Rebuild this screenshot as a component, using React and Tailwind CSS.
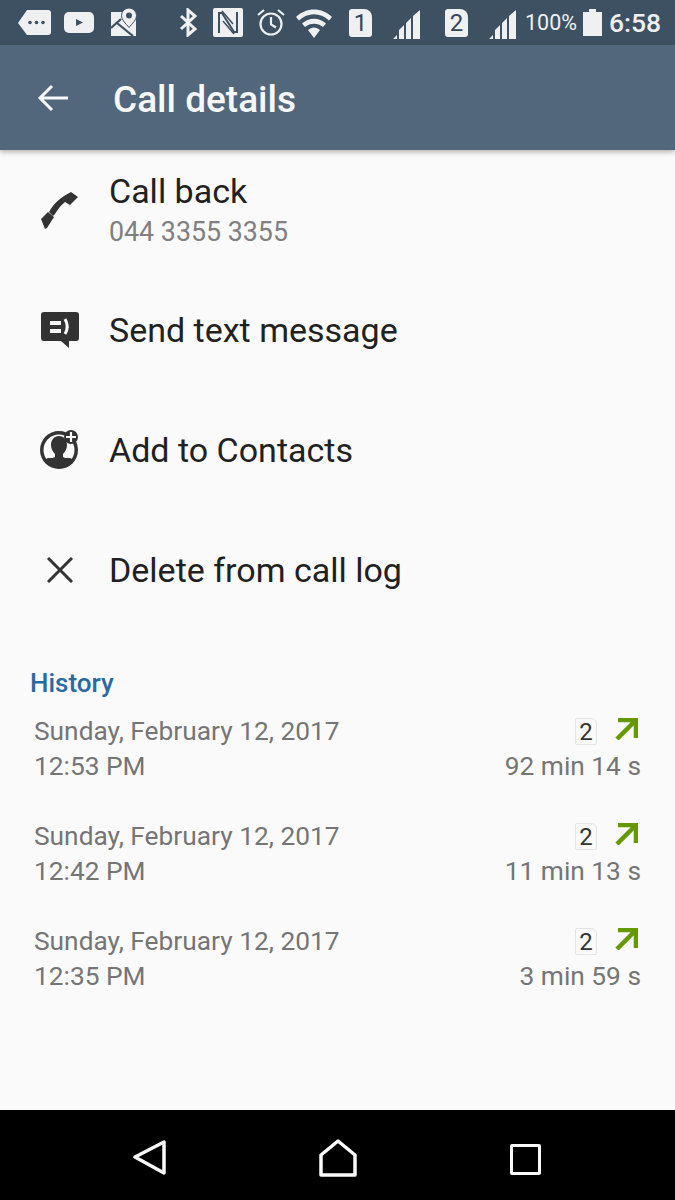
const history = [
  { time: "12:53 PM", duration: "92 min 14 s" },
  { time: "12:42 PM", duration: "11 min 13 s" },
  { time: "12:35 PM", duration: "3 min 59 s" },
];

function SimCard({ n }) {
  return (
    <div className="flex h-[28px] w-[23px] items-center justify-center rounded-[3px] rounded-tr-[8px] bg-[#eef0f2] text-[24px] leading-none text-[#34475a]">
      {n}
    </div>
  );
}

function Signal() {
  return (
    <svg width="28" height="29" viewBox="0 0 28 29" fill="#eef0f2">
      <path d="M0 29l4-4v4zM6 29v-9l5-5v14zM13 29V13l5-5v21zM20 29V6l7-6v29z" />
    </svg>
  );
}

function StatusBar() {
  return (
    <div className="relative h-[45px] shrink-0 bg-[#3e5162]">
      <div className="absolute left-[18px] top-[10px] flex items-center">
        <svg width="33" height="25" viewBox="0 0 33 25">
          <path d="M9 0h21a3 3 0 0 1 3 3v19a3 3 0 0 1-3 3H9l-9-12z" fill="#eef0f2" />
          <circle cx="12" cy="12.500" r="1.800" fill="#3e5162" />
          <circle cx="18.500" cy="12.500" r="1.800" fill="#3e5162" />
          <circle cx="25" cy="12.500" r="1.800" fill="#3e5162" />
        </svg>
      </div>
      <div className="absolute left-[64px] top-[12px]">
        <svg width="30" height="21" viewBox="0 0 30 21">
          <rect width="30" height="21" rx="5" fill="#eef0f2" />
          <path d="M12 7l7 3.500-7 3.500z" fill="#3e5162" />
        </svg>
      </div>
      <div className="absolute left-[111px] top-[8px]">
        <svg width="26" height="28" viewBox="0 0 26 28" fill="#eef0f2">
          <path d="M0 4h11l7 14 7-10v20H0z" />
          <path d="M18 0a7.500 7.500 0 0 1 7.500 7.500c0 4-4 8-7.500 12-3.500-4-7.500-8-7.500-12A7.500 7.500 0 0 1 18 0z" stroke="#3e5162" strokeWidth="1" />
          <circle cx="18" cy="7.500" r="3" fill="#3e5162" />
          <path d="M0 20L10 11M6 15l16 13" stroke="#3e5162" strokeWidth="2.200" fill="none" />
        </svg>
      </div>
      <div className="absolute left-[179px] top-[8px]">
        <svg width="19" height="29" viewBox="0 0 19 29" fill="none" stroke="#eef0f2" strokeWidth="3">
          <path d="M2 8l14 13-7 6V2l7 6L2 21" />
        </svg>
      </div>
      <div className="absolute left-[213px] top-[8px]">
        <svg width="30" height="29" viewBox="0 0 30 29">
          <rect width="30" height="29" rx="2" fill="#eef0f2" />
          <path d="M6 25V5h3l12 19h3V4" stroke="#3e5162" strokeWidth="2" fill="none" />
          <path d="M10 13l11 13M20 16L9 3" stroke="#3e5162" strokeWidth="1.500" fill="none" />
        </svg>
      </div>
      <div className="absolute left-[257px] top-[8px]">
        <svg width="28" height="29" viewBox="0 0 28 29" fill="none" stroke="#eef0f2" strokeWidth="2.200">
          <circle cx="14" cy="16" r="10.500" />
          <path d="M14 9v7.500l5 3M1 7l6-5M27 7l-6-5" />
        </svg>
      </div>
      <div className="absolute left-[296px] top-[9px]">
        <svg width="36" height="30" viewBox="0 0 36 30" fill="#eef0f2">
          <path d="M0 8C10-2 26-2 36 8l-3 3.500C24 3 12 3 3 11.500z" />
          <path d="M6 14.500c7-6.500 17-6.500 24 0l-3 3.500c-5-4.500-13-4.500-18 0z" />
          <path d="M12 21c4-3.500 8-3.500 12 0l-6 8z" />
        </svg>
      </div>
      <div className="absolute left-[349px] top-[9px]"><SimCard n="1" /></div>
      <div className="absolute left-[393px] top-[10px]"><Signal /></div>
      <div className="absolute left-[445px] top-[9px]"><SimCard n="2" /></div>
      <div className="absolute left-[489px] top-[10px]"><Signal /></div>
      <div className="absolute left-[525px] top-[9px] text-[21.5px] leading-[28px] text-[#eef0f2]">100%</div>
      <div className="absolute left-[583px] top-[9px]">
        <svg width="19" height="27" viewBox="0 0 19 27" fill="#eef0f2">
          <path d="M6 0h7v3h6v24H0V3h6z" />
        </svg>
      </div>
      <div className="absolute left-[609px] top-[7px] text-[26.5px] leading-[32px] font-medium text-[#eef0f2]">6:58</div>
    </div>
  );
}

function AppBar() {
  return (
    <div className="z-10 flex h-[105px] shrink-0 items-center bg-[#52677c] shadow-[0_2px_5px_rgba(0,0,0,0.3)]">
      <div className="flex w-[113px] pl-[37px]">
        <svg width="32" height="30" viewBox="0 0 32 30" fill="none" stroke="#f7f8f9" strokeWidth="3">
          <path d="M31 15H3M15 3L3 15l12 12" />
        </svg>
      </div>
      <div className="mt-[3px] text-[37px] font-medium leading-none text-[#f7f8f9]">Call details</div>
    </div>
  );
}

function ActionRow({ icon, label, sub }) {
  return (
    <div className="flex h-[120px] items-center">
      <div className="flex w-[109px] justify-center pl-[10px]">{icon}</div>
      <div>
        <div className="text-[34px] leading-[38px] text-[#212121]">{label}</div>
        {sub && <div className="mt-[6px] text-[26.8px] leading-[32px] text-[#808080]">{sub}</div>}
      </div>
    </div>
  );
}

const phoneIcon = (
  <svg width="37" height="37" viewBox="0 0 37 37" fill="#333">
    <path d="M0 27l7-7 6 5-7 11-2 1z" />
    <path d="M8 20C13 11 20 5 30 0l7 5-8 8-5-3c-4 3-7 7-10 12l-2 2z" />
  </svg>
);

const messageIcon = (
  <svg width="38" height="36" viewBox="0 0 38 36">
    <path d="M3 0h32a3 3 0 0 1 3 3v23a3 3 0 0 1-3 3H28v7l-8-7H3a3 3 0 0 1-3-3V3a3 3 0 0 1 3-3z" fill="#333" />
    <path d="M9 9h11v4H9zM9 17h11v4H9z" fill="#fafafa" />
    <path d="M24 7c3 5 3 10 0 15" stroke="#fafafa" strokeWidth="3" fill="none" />
  </svg>
);

const contactIcon = (
  <svg width="40" height="40" viewBox="0 0 40 40">
    <circle cx="19" cy="20" r="19" fill="#333" />
    <circle cx="19" cy="20" r="15.500" fill="#fafafa" />
    <path d="M19 6c5 0 8 4 8 9 0 4-2 7-4 9v3l9 4a19 19 0 0 1-26 0l9-4v-3c-2-2-4-5-4-9 0-5 3-9 8-9z" fill="#333" />
    <path d="M4 30a19 19 0 0 0 30 0l-4-2-22 0z" fill="#333" />
    <circle cx="31" cy="7" r="7" fill="#333" />
    <path d="M31 2v10M26 7h10" stroke="#fafafa" strokeWidth="2.200" />
  </svg>
);

const closeIcon = (
  <svg width="26" height="26" viewBox="0 0 26 26" stroke="#333" strokeWidth="3" fill="none">
    <path d="M1 1l24 24M25 1L1 25" />
  </svg>
);

function HistoryRow({ time, duration }) {
  return (
    <div className="flex h-[105px] justify-between pl-[34px] pr-[34px] text-[26.3px] leading-[35px] text-[#757575]">
      <div>
        <div>Sunday, February 12, 2017</div>
        <div>{time}</div>
      </div>
      <div className="flex flex-col items-end">
        <div className="flex h-[35px] items-center">
          <div className="flex h-[27px] w-[22px] items-center justify-center rounded-[2px] rounded-tr-[6px] border border-[#e4e4e4] text-[24px] leading-none text-[#333]">
            2
          </div>
          <svg className="mb-[6px] ml-[18px] mr-[3px]" width="23" height="22" viewBox="0 0 23 22" fill="none" stroke="#669900" strokeWidth="4.500">
            <path d="M3 2h18v18M21 2L2 21" />
          </svg>
        </div>
        <div>{duration}</div>
      </div>
    </div>
  );
}

function NavBar() {
  return (
    <div className="flex h-[90px] shrink-0 items-center bg-black pt-[6px]">
      <div className="flex w-[166px] justify-end">
        <svg width="33" height="36" viewBox="0 0 33 36" fill="none" stroke="#fafafa" strokeWidth="3.500" strokeLinejoin="round">
          <path d="M2 17L31 2v31z" />
        </svg>
      </div>
      <div className="ml-[153px]">
        <svg width="38" height="38" viewBox="0 0 38 38" fill="none" stroke="#fafafa" strokeWidth="3.500" strokeLinejoin="round">
          <path d="M2 16L19 2l17 14v20H2z" />
        </svg>
      </div>
      <div className="ml-[153px] mt-[2px] h-[31px] w-[31px] rounded-[2px] border-[3.5px] border-[#fafafa]" />
    </div>
  );
}

export default function App() {
  return (
    <div className="flex h-[1200px] w-[675px] flex-col overflow-hidden bg-[#fafafa] font-['Roboto',sans-serif]">
      <StatusBar />
      <AppBar />
      <div className="flex-1">
        <ActionRow icon={phoneIcon} label="Call back" sub="044 3355 3355" />
        <ActionRow icon={messageIcon} label="Send text message" />
        <ActionRow icon={contactIcon} label="Add to Contacts" />
        <ActionRow icon={closeIcon} label="Delete from call log" />
        <div className="pl-[30px] pt-[37px] text-[26px] font-medium leading-[32px] text-[#2a6a9e]">History</div>
        <div className="pt-[15px]">
          {history.map((row) => (
            <HistoryRow key={row.time} {...row} />
          ))}
        </div>
      </div>
      <NavBar />
    </div>
  );
}
